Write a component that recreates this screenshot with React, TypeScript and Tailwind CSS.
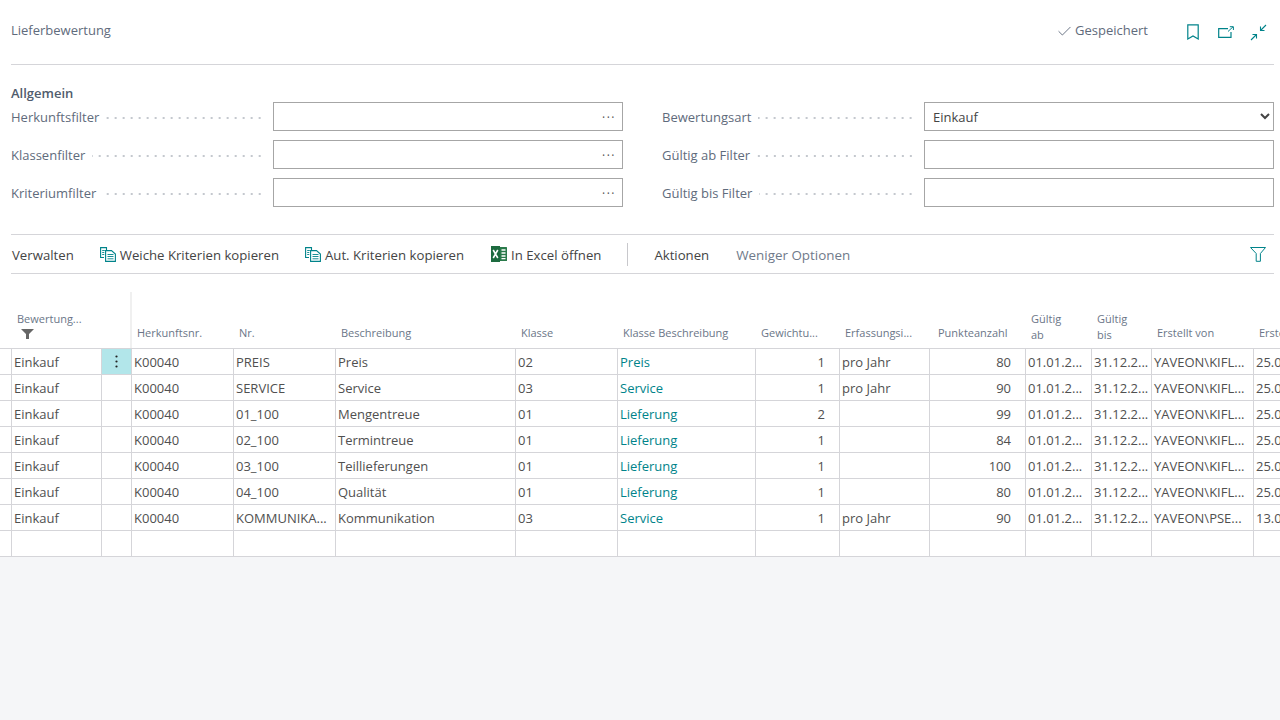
import { Check } from "lucide-react";

const font = "font-['Open_Sans','Noto_Sans',sans-serif]";
const gridCols =
  "grid grid-cols-[12px_90px_30px_102px_102px_180px_102px_138px_84px_90px_96px_66px_60px_102px_60px]";

const rows = [
  ["K00040", "PREIS", "Preis", "02", "Preis", "1", "pro Jahr", "80", "YAVEON\\KIFL...", "25.0"],
  ["K00040", "SERVICE", "Service", "03", "Service", "1", "pro Jahr", "90", "YAVEON\\KIFL...", "25.0"],
  ["K00040", "01_100", "Mengentreue", "01", "Lieferung", "2", "", "99", "YAVEON\\KIFL...", "25.0"],
  ["K00040", "02_100", "Termintreue", "01", "Lieferung", "1", "", "84", "YAVEON\\KIFL...", "25.0"],
  ["K00040", "03_100", "Teillieferungen", "01", "Lieferung", "1", "", "100", "YAVEON\\KIFL...", "25.0"],
  ["K00040", "04_100", "Qualität", "01", "Lieferung", "1", "", "80", "YAVEON\\KIFL...", "25.0"],
  ["K00040", "KOMMUNIKA...", "Kommunikation", "03", "Service", "1", "pro Jahr", "90", "YAVEON\\PSE...", "13.0"],
];

const CopyIcon = () => (
  <svg width="16" height="15" viewBox="0 0 16 15" fill="none" stroke="#00838a" strokeWidth="1.1" className="-mt-[2px]">
    <path d="M6.5 3V0.6H0.6V10.5H4" />
    <path d="M2.2 3.5H4.8M2.2 5.5H4.3M2.2 7.5H4.3" strokeWidth="0.9" />
    <path d="M5.6 3.6H11.5L15.4 7V14.4H5.6Z" />
    <path d="M7.5 7.5H13.5M7.5 9.5H13.5M7.5 11.8H13.5" strokeWidth="0.9" />
  </svg>
);

const ExcelIcon = () => (
  <svg width="16" height="16" viewBox="0 0 16 16" className="-mt-[2px]">
    <rect x="8" y="1" width="8" height="14" rx="0.5" fill="#2a7a4b" />
    <path d="M10.5 4H14.5M10.5 7H14.5M10.5 10H14.5M10.5 12.6H14.5" stroke="#fff" strokeWidth="1.3" />
    <rect x="0" y="0" width="9" height="16" fill="#1d6b3f" />
    <path d="M2.2 4L6.8 12M6.8 4L2.2 12" stroke="#fff" strokeWidth="1.6" />
  </svg>
);

const BookmarkIcon = () => (
  <svg width="12" height="16" viewBox="0 0 12 16" fill="none" stroke="#00838a" strokeWidth="1.2">
    <path d="M0.8 0.8H11.2V15L6 12L0.8 15Z" />
  </svg>
);

const ShareIcon = () => (
  <svg width="16" height="12" viewBox="0 0 16 12" fill="none" stroke="#00838a" strokeWidth="1.2">
    <path d="M10 2.6H0.7V11.3H13V6" />
    <path d="M10 5.5L15 0.8M11.8 0.7H15.4V4" strokeWidth="1" />
  </svg>
);

const CollapseIcon = () => (
  <svg width="17" height="17" viewBox="0 0 17 17" fill="none" stroke="#00838a" strokeWidth="1.1">
    <path d="M16 1L10.5 6.5M10.5 2.5V6.5H14.5" />
    <path d="M1 16L6.5 10.5M2.5 10.5H6.5V14.5" />
  </svg>
);

const FunnelOutline = () => (
  <svg width="16" height="15" viewBox="0 0 16 15" fill="none" stroke="#00838a" strokeWidth="1" className="-mt-[2px] ml-auto mr-[8px]">
    <path d="M0.5 0.5H15.5L10.4 6.5V14.3H6.2V6.5Z" />
  </svg>
);

const FormRow = ({ label, children }: { label: string; children: React.ReactNode }) => (
  <div className="flex h-[29px] items-center">
    <div className="flex w-[262px] items-center pr-[9px] pt-0.5">
      <span className="whitespace-nowrap text-[13px] text-[#5f6b7c]">{label}</span>
      <span className="ml-[7px] h-[2px] flex-1 bg-[radial-gradient(circle,#c4c8ce_1px,transparent_1px)] bg-[length:8px_2px] bg-right bg-repeat-x" />
    </div>
    {children}
  </div>
);

const LookupInput = () => (
  <div className="flex h-[29px] w-[350px] items-center justify-end border border-[#a6a6a6] bg-white pr-1.5 pt-0.5">
    <span className="text-[12px] leading-none tracking-[1.5px] text-[#555]">···</span>
  </div>
);

const PlainInput = () => <div className="h-[29px] w-[350px] border border-[#a6a6a6] bg-white" />;

const HeaderCell = ({ children, two, offset }: { children: React.ReactNode; two?: boolean; offset?: boolean }) => (
  <div
    className={`flex flex-col justify-end whitespace-nowrap text-[11px] leading-4 text-[#6b7688] ${
      two ? "pb-[5px]" : "pb-[7px]"
    } ${offset ? "pl-2" : "pl-[5px]"}`}
  >
    {children}
  </div>
);

const Cell = ({ children, right, link }: { children?: React.ReactNode; right?: boolean; link?: boolean }) => (
  <div
    className={`flex items-center overflow-hidden whitespace-nowrap border-r border-[#d5d5d9] pl-0.5 pt-0.5 text-[13px] ${
      right ? "justify-end pr-[14px]" : "pr-0.5"
    } ${link ? "text-[#00838a]" : "text-[#505050]"}`}
  >
    {children}
  </div>
);

export default function App() {
  return (
    <div className={`flex h-[720px] w-[1280px] flex-col overflow-hidden bg-[#f5f6f8] ${font}`}>
      <div className="bg-white">
        {/* title bar */}
        <div className="ml-[11px] mr-1.5 flex h-[65px] items-center border-b border-[#d5d5d9]">
          <span className="-mt-0.5 text-[13px] text-[#5f6b7c]">Lieferbewertung</span>
          <div className="-mt-0.5 ml-auto flex items-center text-[13px] text-[#5f6b7c]">
            <Check size={17} strokeWidth={1.3} className="text-[#5f6b7c]" />
            <span className="ml-0.5">Gespeichert</span>
          </div>
          <span className="ml-[39px] flex"><BookmarkIcon /></span>
          <span className="ml-[19px] flex"><ShareIcon /></span>
          <span className="ml-[16px] mr-[7px] flex"><CollapseIcon /></span>
        </div>

        {/* filter form */}
        <div className="px-[11px] pt-5">
          <div className="h-[17px] text-[13px] font-semibold leading-[17px] text-[#505c6d]">Allgemein</div>
          <div className="flex gap-[39px]">
            <div className="flex flex-col gap-[9px]">
              <FormRow label="Herkunftsfilter"><LookupInput /></FormRow>
              <FormRow label="Klassenfilter"><LookupInput /></FormRow>
              <FormRow label="Kriteriumfilter"><LookupInput /></FormRow>
            </div>
            <div className="flex flex-col gap-[9px]">
              <FormRow label="Bewertungsart">
                <select className="h-[29px] w-[350px] border border-[#a6a6a6] bg-white pl-1 text-[13px] text-[#444]">
                  <option>Einkauf</option>
                </select>
              </FormRow>
              <FormRow label="Gültig ab Filter"><PlainInput /></FormRow>
              <FormRow label="Gültig bis Filter"><PlainInput /></FormRow>
            </div>
          </div>
        </div>

        {/* action bar */}
        <div className="ml-[11px] mr-1.5 mt-[27px] flex h-10 items-center border-y border-[#d5d5d9] pl-px pt-[3px] text-[13.2px] text-[#444]">
          <span>Verwalten</span>
          <span className="ml-[26px] flex items-center gap-[4px]"><CopyIcon />Weiche Kriterien kopieren</span>
          <span className="ml-[26px] flex items-center gap-[4px]"><CopyIcon />Aut. Kriterien kopieren</span>
          <span className="ml-[27px] flex items-center gap-[4px]"><ExcelIcon />In Excel öffnen</span>
          <span className="-mt-0.5 ml-[26px] h-[23px] w-px bg-[#c8c8cc]" />
          <span className="ml-[26px]">Aktionen</span>
          <span className="ml-[27px] text-[13.4px] text-[#6f7a8a]">Weniger Optionen</span>
          <FunnelOutline />
        </div>

        {/* table header */}
        <div className={`${gridCols} mt-[18px] h-[57px] border-b border-[#d5d5d9]`}>
          <div />
          <div className="flex flex-col justify-end pb-[9px] pl-[5px] text-[11px] leading-4 text-[#6b7688]">
            <span>Bewertung...</span>
            <svg width="13" height="10" viewBox="0 0 13 10" className="ml-[4px] mt-0.5">
              <path d="M0 0H13L8 5V10H5V5Z" fill="#666" />
            </svg>
          </div>
          <div className="border-r-2 border-[#f0f0f0]" />
          <HeaderCell>Herkunftsnr.</HeaderCell>
          <HeaderCell>Nr.</HeaderCell>
          <HeaderCell>Beschreibung</HeaderCell>
          <HeaderCell>Klasse</HeaderCell>
          <HeaderCell>Klasse Beschreibung</HeaderCell>
          <HeaderCell>Gewichtu...</HeaderCell>
          <HeaderCell>Erfassungsi...</HeaderCell>
          <HeaderCell offset>Punkteanzahl</HeaderCell>
          <HeaderCell two>Gültig<br />ab</HeaderCell>
          <HeaderCell two>Gültig<br />bis</HeaderCell>
          <HeaderCell>Erstellt von</HeaderCell>
          <HeaderCell>Erstellt am</HeaderCell>
        </div>

        {/* table rows */}
        {rows.map((r, i) => (
          <div key={i} className={`${gridCols} h-[26px] border-b border-[#d5d5d9]`}>
            <Cell />
            <Cell>Einkauf</Cell>
            {i === 0 ? (
              <div className="flex items-center justify-center border-r border-[#d5d5d9] bg-[#b2e6ea]">
                <svg width="3" height="13" viewBox="0 0 3 13" fill="#222">
                  <circle cx="1.5" cy="1.5" r="1.1" />
                  <circle cx="1.5" cy="6.5" r="1.1" />
                  <circle cx="1.5" cy="11.5" r="1.1" />
                </svg>
              </div>
            ) : (
              <Cell />
            )}
            <Cell>{r[0]}</Cell>
            <Cell>{r[1]}</Cell>
            <Cell>{r[2]}</Cell>
            <Cell>{r[3]}</Cell>
            <Cell link>{r[4]}</Cell>
            <Cell right>{r[5]}</Cell>
            <Cell>{r[6]}</Cell>
            <Cell right>{r[7]}</Cell>
            <Cell>01.01.2...</Cell>
            <Cell>31.12.2...</Cell>
            <Cell>{r[8]}</Cell>
            <Cell>{r[9]}</Cell>
          </div>
        ))}
        <div className={`${gridCols} h-[26px] border-b border-[#d5d5d9]`}>
          {Array.from({ length: 15 }).map((_, i) => (
            <Cell key={i} />
          ))}
        </div>
      </div>
    </div>
  );
}
